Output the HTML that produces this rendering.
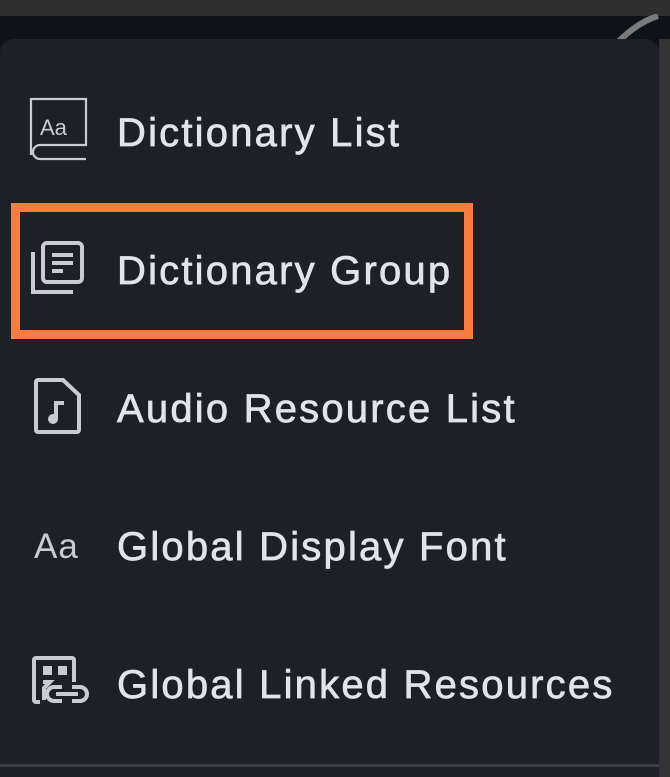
<!DOCTYPE html>
<html><head><meta charset="utf-8"><style>
html,body{margin:0;padding:0;width:670px;height:777px;overflow:hidden;background:#2f2f2f;font-family:"Liberation Sans",sans-serif}
.dark{position:absolute;left:0;top:16px;width:670px;height:40px;background:#0e1317}
.panel{position:absolute;left:0;top:39px;width:659px;height:738px;background:#1d2026;border-radius:14px 14px 0 0}
.right{position:absolute;left:659px;top:39px;width:11px;height:738px;background:#333333}
.line{position:absolute;left:0;top:764px;width:659px;height:3px;background:#3a3e42}
.item{position:absolute;left:117px;color:#e3e4e9;font-size:40px;letter-spacing:2.2px;line-height:40px;-webkit-text-stroke:0.7px #e3e4e9}
.ic{position:absolute;left:28px}
.box{position:absolute;left:11px;top:203px;width:444px;height:118px;border:9px solid #ff7a3d}
</style></head><body>
<div class="dark"></div>
<svg style="position:absolute;left:600px;top:14px" width="70" height="30"><path d="M18 28 Q38 8 58 2" stroke="#7a7a7a" stroke-width="6" fill="none"/></svg>
<div class="panel"></div>
<div class="right"></div>
<div class="line"></div>

<svg class="ic" style="top:95px" width="60" height="70" viewBox="0 0 60 70">
<path d="M3 60 V4 H58 V50 H12 a7 7 0 0 0 0 14 H58" stroke="#c8cbd1" stroke-width="2.2" fill="none"/>
<text x="12" y="40" font-family="Liberation Sans" font-size="22" fill="#c8cbd1">Aa</text>
</svg>
<div class="item" style="top:113px">Dictionary List</div>

<div class="box"></div>
<svg class="ic" style="top:238px" width="60" height="60" viewBox="0 0 60 60">
<rect x="15" y="5" width="39" height="39" rx="4" stroke="#c8cbd1" stroke-width="4" fill="none"/>
<path d="M5 14 V54 H45" stroke="#c8cbd1" stroke-width="4" fill="none"/>
<path d="M24 17 H45 M24 25 H45 M24 33 H35" stroke="#c8cbd1" stroke-width="4"/>
</svg>
<div class="item" style="top:251px">Dictionary Group</div>

<svg class="ic" style="top:378px" width="60" height="60" viewBox="0 0 60 60">
<path d="M10 2 H35 L51 17 V52 a2 2 0 0 1-2 2 H10 a2 2 0 0 1-2-2 V4 a2 2 0 0 1 2-2 Z" stroke="#c8cbd1" stroke-width="4" fill="none"/>
<circle cx="25" cy="41" r="5" fill="#c8cbd1"/>
<path d="M28 41 V25 H36" stroke="#c8cbd1" stroke-width="4" fill="none"/>
</svg>
<div class="item" style="top:389px">Audio Resource List</div>

<div style="position:absolute;left:34px;top:527px;color:#c8cbd1;font-size:35px;line-height:40px;letter-spacing:1px">Aa</div>
<div class="item" style="top:527px">Global Display Font</div>

<svg class="ic" style="top:654px" width="66" height="60" viewBox="0 0 66 60">
<path d="M12 48 H8 a2 2 0 0 1-2-2 V6 a2 2 0 0 1 2-2 H44 a2 2 0 0 1 2 2 V28" stroke="#c8cbd1" stroke-width="4" fill="none"/>
<rect x="15" y="12" width="9" height="9" fill="#c8cbd1"/>
<rect x="30" y="12" width="9" height="9" fill="#c8cbd1"/>
<path d="M15 28 H22 L16 34 V46" stroke="#c8cbd1" stroke-width="4" fill="none"/>
<path d="M34 33 H26 a7 7 0 0 0 0 14 H34 M44 33 H52 a7 7 0 0 1 0 14 H44 M28 40 H50" stroke="#c8cbd1" stroke-width="4" fill="none"/>
</svg>
<div class="item" style="top:665px">Global Linked Resources</div>
</body></html>
